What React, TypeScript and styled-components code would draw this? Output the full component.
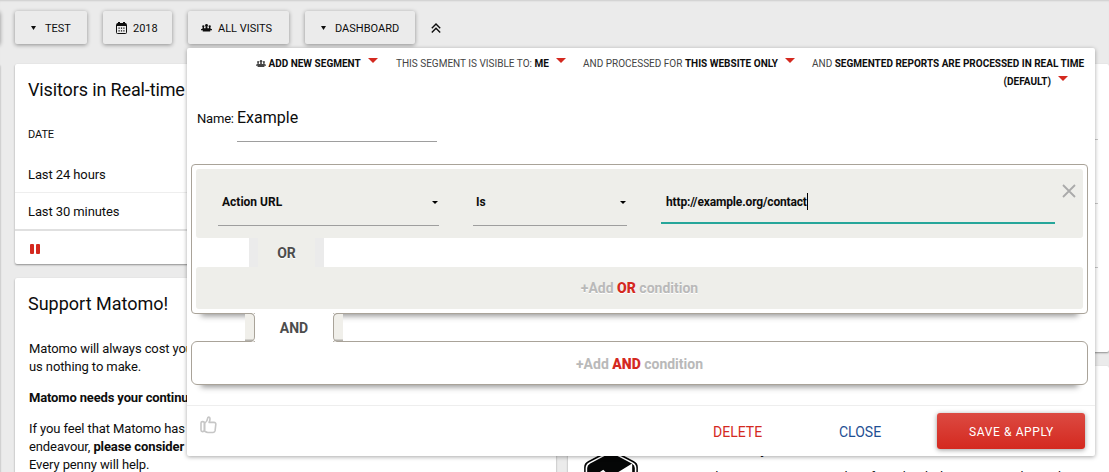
import styled, { createGlobalStyle } from "styled-components";

const GlobalStyle = createGlobalStyle`
    * {
        box-sizing: border-box;
    }

    body {
        margin: 0;
        background: #ebebeb;
        color: #0d0d0d;
        font-family: Roboto, "Liberation Sans", sans-serif;
        font-size: 13px;
    }

    p {
        margin: 0;
    }
`;

const SEGMENT_OPTIONS = [
    { id: 1, label: "", value: "ADD NEW SEGMENT", width: 140, icon: true },
    { id: 2, label: "THIS SEGMENT IS VISIBLE TO:", value: "ME", width: 187 },
    { id: 3, label: "AND PROCESSED FOR", value: "THIS WEBSITE ONLY", width: 229 },
];

function UsersIcon({ size, color }: { size: number; color: string }) {
    return (
        <svg width={size} height={size * 0.7} viewBox="0 0 22 15" fill={color}>
            <circle cx="4.6" cy="4.4" r="2.3" />
            <circle cx="11" cy="2.8" r="2.8" />
            <circle cx="17.4" cy="4.4" r="2.3" />
            <path d="M3.2 6H6v2.500h3.200V5h3.600v3.500H16V6h2.800v2.600L22 10.300V12.500h-3.500v2.500h-15v-2.500H0v-2.200l3.200-1.700z" />
        </svg>
    );
}

function CalendarIcon() {
    return (
        <svg width="11" height="12" viewBox="0 0 11 12">
            <path d="M1.5 1.5h8a1 1 0 0 1 1 1v8a1 1 0 0 1-1 1h-8a1 1 0 0 1-1-1v-8a1 1 0 0 1 1-1z" fill="none" stroke="#0d0d0d" />
            <path d="M1 1.5h9V4H1zM2 0h2v2H2zM7 0h2v2H7z" fill="#0d0d0d" />
            <path d="M2.5 6.2h6.2M2.5 8.8h6.2" stroke="#0d0d0d" strokeWidth="1.2" strokeDasharray="1.2 1.2" />
        </svg>
    );
}

function ThumbIcon() {
    return (
        <svg width="17" height="18" viewBox="0 0 17 18" fill="none" stroke="#c6c6c6" strokeWidth="1.6" strokeLinejoin="round">
            <rect x="1" y="5.6" width="3.4" height="10" rx="1.5" />
            <path d="M4.6 7.3C6.4 6 7.5 4.4 7.7 2.1C7.8.7 10 .7 10 2.7c0 1.5-.4 2.6-.9 3.7h4.8c1.5 0 2.1.8 1.9 2l-.7 6.3c-.2 1.3-.9 1.8-2 1.8H8c-1.4 0-2.3-.6-3.4-1.3z" />
        </svg>
    );
}

function LogoIcon() {
    return (
        <svg width="56" height="62" viewBox="0 0 54 60">
            <path d="M23 1.2q4-2 8 0l18 9.500q4 2 4 6v27q0 4-4 6L31 59q-4 2-8 0L5 49.700q-4-2-4-6v-27q0-4 4-6z" fill="#050606" />
            <path d="M23.600 3.500q3.400-1.700 6.800 0L47.500 12.500q3.300 1.700 3.300 5v25q0 3.300-3.300 5l-17 9q-3.500 1.700-7 0l-17-9q-3.300-1.700-3.300-5v-25q0-3.300 3.300-5z" fill="none" stroke="#fff" strokeWidth="1.5" />
            <path d="M16 21.500l3.500-2.500 7 7L47.500 13v9L28 40z" fill="#fff" />
        </svg>
    );
}

function App() {
    return (
        <PageStyle>
            <GlobalStyle />
            <TopBar>
                <TopButton $width={72}><SmallCaret />TEST</TopButton>
                <TopButton $width={69}><CalendarIcon />2018</TopButton>
                <TopButton $width={101}><UsersIcon size={11} color="#0d0d0d" />ALL VISITS</TopButton>
                <TopButton $width={110}><SmallCaret />DASHBOARD</TopButton>
                <svg width="10" height="10" viewBox="0 0 10 10" fill="none" stroke="#0d0d0d" strokeWidth="1.4">
                    <path d="M.8 5.200L5 1l4.200 4.200M.8 9.400L5 5.200l4.200 4.200" />
                </svg>
            </TopBar>
            <Columns>
                <Column><Card $height={440} /></Column>
                <Column>
                    <Card $height={200}>
                        <CardTitle $spacing="-0.13px">Visitors in Real-time</CardTitle>
                        <TableHead>DATE</TableHead>
                        <TableRow $height={37}>Last 24 hours</TableRow>
                        <TableRow $height={38}>Last 30 minutes</TableRow>
                        <PauseRow><span /><span /></PauseRow>
                    </Card>
                    <Card $height={260}>
                        <CardTitle $spacing="0">Support Matomo!</CardTitle>
                        <SupportText>
                            <p>Matomo will always cost you nothing to use, but that doesn't mean it costs<br />us nothing to make.</p>
                            <p><b>Matomo needs your continued support to grow and thrive.</b></p>
                            <p>If you feel that Matomo has added significant value to your business or<br />endeavour, <b>please consider making a donation</b>.<br />Every penny will help.</p>
                        </SupportText>
                    </Card>
                </Column>
                <Column>
                    <Card $height={288}>
                        <ChartLines><span /><span /><span /></ChartLines>
                    </Card>
                    <Card $height={200}>
                        <NewsRow>
                            <LogoIcon />
                            <div>
                                <h3>Matomo Security</h3>
                                <p>using email or messaging a reading for a back door is something about</p>
                            </div>
                        </NewsRow>
                    </Card>
                </Column>
            </Columns>

            <SegmentEditor>
                <SegmentHeader>
                    {SEGMENT_OPTIONS.map((item) => (
                        <SegmentOption key={item.id} $width={item.width}>
                            {item.icon && <UsersIcon size={10} color="#444" />}
                            {item.label} <b>{item.value}</b><RedCaret />
                        </SegmentOption>
                    ))}
                    <SegmentOption $width={272} $wrap>
                        AND <b>SEGMENTED REPORTS ARE PROCESSED IN REAL TIME<br />(DEFAULT)</b><RedCaret />
                    </SegmentOption>
                </SegmentHeader>
                <NameRow>
                    <label>Name:</label>
                    <NameField>Example</NameField>
                </NameRow>
                <ConditionBlock>
                    <ConditionRow>
                        <SelectField $width={221}>Action URL<SelectCaret /></SelectField>
                        <SelectField $width={154}>Is<SelectCaret /></SelectField>
                        <ValueField>http://example.org/contact<Cursor /></ValueField>
                        <svg width="14" height="14" viewBox="0 0 14 14" stroke="#aaa" strokeWidth="1.8">
                            <path d="M1 1l12 12M13 1L1 13" />
                        </svg>
                    </ConditionRow>
                    <OrTab><span>OR</span></OrTab>
                    <AddOr>+Add&nbsp;<b>OR</b>&nbsp;condition</AddOr>
                </ConditionBlock>
                <AndRow>
                    <AndNotch $side="left" />
                    <AndLabel>AND</AndLabel>
                    <AndNotch $side="right" />
                </AndRow>
                <AddAnd>+Add&nbsp;<b>AND</b>&nbsp;condition</AddAnd>
                <Footer>
                    <ThumbIcon />
                    <FooterLink $color="#d4291f" $width={126}>DELETE</FooterLink>
                    <FooterLink $color="#1e4f93" $width={98}>CLOSE</FooterLink>
                    <SaveButton>SAVE &amp; APPLY</SaveButton>
                </Footer>
            </SegmentEditor>
        </PageStyle>
    );
}

const PageStyle = styled.div`
    position: relative;
    width: 1109px;
    height: 472px;
    overflow: hidden;
    box-shadow: inset 0 2px 2px -1px #ccc;
`;

const TopBar = styled.div`
    display: flex;
    align-items: center;
    gap: 16px;
    height: 64px;
    padding: 11px 0 20px 15px;

    &::before {
        content: "";
        width: 10px;
        height: 33px;
        margin-left: -25px;
        margin-right: -1px;
        border-radius: 2px;
        box-shadow: 0 1px 4px rgba(0, 0, 0, 0.4);
    }
`;

const TopButton = styled.div<{ $width: number }>`
    display: flex;
    align-items: center;
    width: ${({ $width }) => $width}px;
    height: 33px;
    padding: 1px 0 0 13px;
    gap: 6px;
    background: #ebebeb;
    border-radius: 2px;
    box-shadow: 0 1px 4px rgba(0, 0, 0, 0.4);
    font-size: 11px;
    white-space: nowrap;
`;

const SmallCaret = styled.span`
    width: 5px;
    height: 4px;
    margin: 0 3px;
    background: #0d0d0d;
    clip-path: polygon(0 0, 100% 0, 50% 100%);
`;

const Columns = styled.div`
    display: grid;
    grid-template-columns: 541px 541px 541px;
    gap: 12px;
    margin-left: -538px;
`;

const Column = styled.div`
    display: flex;
    flex-direction: column;
    gap: 14px;

    &:first-child {
        margin-right: 3px;
    }
`;

const Card = styled.div<{ $height: number }>`
    flex: none;
    height: ${({ $height }) => $height}px;
    background: #fff;
    border-radius: 2px;
    box-shadow: 0 1px 2px rgba(0, 0, 0, 0.4);
    letter-spacing: -0.1px;
    overflow: hidden;
`;

const CardTitle = styled.div<{ $spacing: string }>`
    height: 51px;
    padding: 1px 13px 0;
    font-size: 18px;
    letter-spacing: ${({ $spacing }) => $spacing};
    line-height: 50px;
`;

const TableHead = styled.div`
    height: 41px;
    padding-left: 13px;
    font-size: 11px;
    line-height: 40px;
`;

const TableRow = styled.div<{ $height: number }>`
    height: ${({ $height }) => $height}px;
    padding-left: 13px;
    border-bottom: 1px solid #eee;
    line-height: 37px;

    & + & {
        border-bottom: 2px solid #e0e0e0;
    }
`;

const PauseRow = styled.div`
    display: flex;
    gap: 2px;
    padding: 13px 15px;

    span {
        width: 4px;
        height: 10px;
        border-radius: 1px;
        background: #d4291f;
    }
`;

const SupportText = styled.div`
    padding: 11px 14px;
    line-height: 18px;
    white-space: nowrap;

    p {
        margin-bottom: 13px;
    }

    p > b:only-child {
        letter-spacing: -0.15px;
    }
`;

const ChartLines = styled.div`
    display: flex;
    flex-direction: column;
    gap: 63px;
    width: 530px;
    padding-top: 75px;

    span {
        height: 1px;
        background: #c8c8c8;
    }
`;

const NewsRow = styled.div`
    display: flex;
    gap: 9px;
    padding: 84px 0 0 15px;
    white-space: nowrap;

    h3 {
        margin: -12px 0 8px;
        font-size: 16px;
        font-weight: 400;
        line-height: 22px;
    }

    p {
        line-height: 18px;
        letter-spacing: 0.4px;
    }
`;

const SegmentEditor = styled.div`
    position: absolute;
    top: 48px;
    left: 187px;
    width: 908px;
    height: 408px;
    background: #fff;
    border-radius: 2px;
    box-shadow: 0 1px 4px rgba(0, 0, 0, 0.35);
`;

const SegmentHeader = styled.div`
    display: flex;
    height: 52px;
    padding: 7px 0 0 69px;
`;

const SegmentOption = styled.div<{ $width: number; $wrap?: boolean }>`
    width: ${({ $width }) => $width}px;
    color: #444;
    font-size: 10px;
    line-height: 18px;
    white-space: nowrap;
    text-align: ${({ $wrap }) => ($wrap ? "right" : "left")};

    b {
        color: #0d0d0d;
    }
`;

const RedCaret = styled.span`
    display: inline-block;
    margin: 0 16px 4px 7px;
    border: 5px solid transparent;
    border-top-color: #d4291f;
    border-bottom: 0;
`;

const NameRow = styled.div`
    display: flex;
    height: 64px;
    padding-left: 10px;

    label {
        width: 40px;
        letter-spacing: -0.2px;
        line-height: 37px;
    }
`;

const NameField = styled.div`
    width: 200px;
    height: 42px;
    border-bottom: 1px solid #9e9e9e;
    font-size: 16px;
    line-height: 36px;
`;

const ConditionBlock = styled.div`
    width: 897px;
    height: 150px;
    margin-left: 4px;
    padding: 4px;
    border: 1px solid #a9a399;
    border-radius: 4px;
    box-shadow: 0 12px 6px -10px rgba(0, 0, 0, 0.42);
`;

const ConditionRow = styled.div`
    display: flex;
    height: 69px;
    padding-left: 22px;
    background: #eeeeea;
    border-radius: 3px;

    > svg {
        margin: 15px 0 0 7px;
    }
`;

const SelectField = styled.div<{ $width: number }>`
    display: flex;
    align-items: center;
    justify-content: space-between;
    width: ${({ $width }) => $width}px;
    height: 57px;
    margin-right: 34px;
    padding: 10px 1px 0 4px;
    border-bottom: 1px solid #9e9e9e;
    font-size: 12px;
    font-weight: 700;

    & + & {
        padding-left: 3px;
    }
`;

const SelectCaret = styled.span`
    border: 3px solid transparent;
    border-top-color: #000;
    border-bottom: 0;
`;

const ValueField = styled.div`
    display: flex;
    align-items: center;
    width: 394px;
    height: 55px;
    padding: 12px 0 0 5px;
    border-bottom: 2px solid #26a69a;
    font-size: 12px;
    font-weight: 700;
    letter-spacing: -0.15px;
`;

const Cursor = styled.span`
    width: 1px;
    height: 17px;
    background: #000;
`;

const OrTab = styled.div`
    width: 75px;
    height: 29px;
    margin-left: 53px;
    background: #ebebeb;
    color: #4d4d4d;
    font-size: 14px;
    font-weight: 700;
    line-height: 30px;
    text-align: center;
    text-shadow: 0 1px 0 #fff;

    span {
        display: block;
        height: 29px;
        margin: 0 9px;
        background: #eeeeea;
    }
`;

const AddOr = styled.div`
    display: flex;
    align-items: center;
    justify-content: center;
    height: 42px;
    background: #eeeeea;
    border-radius: 3px;
    color: #b9b9b9;
    font-size: 14px;
    font-weight: 700;
    text-shadow: 0 1px 0 #fff;

    b {
        color: #d4291f;
    }
`;

const AndRow = styled.div`
    position: relative;
    z-index: 1;
    display: flex;
    height: 29px;
    margin: -1px 0 -1px 58px;
`;

const AndNotch = styled.div<{ $side: "left" | "right" }>`
    width: 10px;
    border: 1px solid #a9a399;
    background: linear-gradient(#f0efea 25px, #b5b3ae 26px);
    ${({ $side }) =>
        $side === "left"
            ? "border-left: 0; border-radius: 0 5px 5px 0; box-shadow: 2px 0 0 #fff;"
            : "border-right: 0; border-radius: 5px 0 0 5px; box-shadow: -2px 0 0 #fff;"}
`;

const AndLabel = styled.div`
    width: 78px;
    background: #fff;
    color: #4d4d4d;
    font-size: 14px;
    font-weight: 700;
    line-height: 30px;
    text-align: center;
`;

const AddAnd = styled(AddOr)`
    width: 897px;
    height: 44px;
    margin-left: 4px;
    padding-top: 1px;
    border: 1px solid #a9a399;
    border-radius: 6px;
    background: #fff;
    box-shadow: 0 12px 6px -10px rgba(0, 0, 0, 0.42);
`;

const Footer = styled.div`
    display: flex;
    height: 51px;
    margin-top: 20px;
    padding: 7px 10px 0 13px;
    border-top: 1px solid #eee;

    > svg {
        margin: 3px auto 0 0;
    }
`;

const FooterLink = styled.div<{ $color: string; $width: number }>`
    width: ${({ $width }) => $width}px;
    color: ${({ $color }) => $color};
    font-size: 14px;
    line-height: 38px;
    white-space: nowrap;
`;

const SaveButton = styled.div`
    width: 148px;
    height: 36px;
    padding-left: 1px;
    border-radius: 3px;
    background: linear-gradient(#dc4a42, #d4291f);
    box-shadow: 0 1px 5px rgba(0, 0, 0, 0.4);
    color: #fff;
    font-size: 12px;
    letter-spacing: 0.6px;
    line-height: 38px;
    text-align: center;
`;

export default App;
